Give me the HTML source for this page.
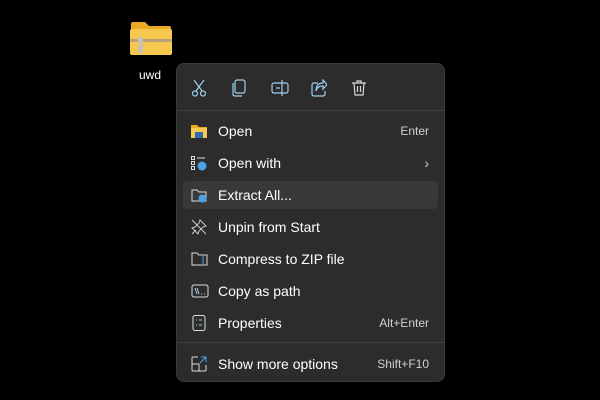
<!DOCTYPE html>
<html><head><style>
body{margin:0;width:600px;height:400px;background:#000;font-family:"Liberation Sans",sans-serif;position:relative;overflow:hidden}
.menu{position:absolute;left:176px;top:63px;width:269px;height:319px;background:#2c2c2c;border:1px solid #3a3a3a;border-radius:8px;box-sizing:border-box}
.sep{position:absolute;left:0;right:0;height:1px;background:#404040}
.it{position:absolute;left:0;right:0;height:28px;color:#fff;font-size:14px;line-height:28px}
.it .t{position:absolute;left:41px}
.it .k{position:absolute;right:15px;font-size:12px;color:#d0d0d0}
.it svg{position:absolute;left:14px;top:6px}
.tb svg{position:absolute;top:15px}
</style></head><body>
<svg style="position:absolute;left:129px;top:20px" width="44" height="36" viewBox="0 0 44 36">
<path d="M2 4 Q2 2 4 2 H16 L20 6 H40 Q42 6 42 8 V12 H2Z" fill="#e8a923"/>
<rect x="1" y="9" width="42" height="26" rx="2" fill="#f6c94e"/>
<rect x="1" y="19" width="42" height="3" fill="#b9a27a"/>
<rect x="9" y="17" width="5" height="16" fill="#c9c0b0"/>
</svg>
<div style="position:absolute;left:139px;top:68px;color:#fff;font-size:12px">uwd</div>
<div class="menu">
<div class="tb">
<svg style="left:14px" width="16" height="18" viewBox="0 0 16 18" fill="none" stroke="#9ecfee" stroke-width="1.2"><path d="M3 1L11 12M13 1L5 12"/><circle cx="4" cy="14.5" r="2.5"/><circle cx="12" cy="14.5" r="2.5"/></svg>
<svg style="left:54px" width="16" height="18" viewBox="0 0 16 18" fill="none" stroke="#9ecfee" stroke-width="1.2"><rect x="4" y="1" width="10" height="13" rx="2"/><path d="M2 4V15Q2 17 4 17H11"/></svg>
<svg style="left:94px" width="18" height="18" viewBox="0 0 18 18" fill="none" stroke="#9ecfee" stroke-width="1.2"><rect x="1" y="4" width="16" height="10" rx="2"/><path d="M11 1V17M5 9H9"/></svg>
<svg style="left:134px" width="16" height="18" viewBox="0 0 16 18" fill="none" stroke="#9ecfee" stroke-width="1.2"><path d="M7 4H3Q1 4 1 6V15Q1 17 3 17H12Q14 17 14 15V12"/><path d="M5 12Q6 7 12 7V10L16 5.5L12 1V4Q5 4 5 12Z"/></svg>
<svg style="left:174px" width="16" height="18" viewBox="0 0 16 18" fill="none" stroke="#d8d8d8" stroke-width="1.2"><path d="M1 4H15M6 4V2H10V4M3 4L4 16H12L13 4M6.5 7V13M9.5 7V13"/></svg>
</div>
<div class="sep" style="top:46px"></div>
<div class="it" style="top:53px"><svg width="16" height="16"><path d="M0 2H6L8 4H16V14H0Z" fill="#e8a923"/><rect x="0" y="5" width="16" height="10" fill="#f6c94e"/><rect x="4" y="9" width="8" height="6" fill="#2b6cb0"/></svg><span class="t">Open</span><span class="k">Enter</span></div>
<div class="it" style="top:85px"><svg width="16" height="16" fill="none" stroke="#ddd"><rect x="0.5" y="1.5" width="3" height="3"/><rect x="0.5" y="6.5" width="3" height="3"/><rect x="0.5" y="11.5" width="3" height="3"/><path d="M6 3H14"/><circle cx="11" cy="11" r="4.5" fill="#4aa3e8" stroke="none"/></svg><span class="t">Open with</span><span class="k" style="font-size:14px;color:#ccc">›</span></div>
<div class="it" style="top:117px;left:6px;right:6px;background:#383838;border-radius:4px"><svg style="left:8px" width="16" height="16" fill="none" stroke="#ddd"><path d="M1 3H6L8 5H15V14H1Z"/><circle cx="11.5" cy="11.5" r="4" fill="#4aa3e8" stroke="none"/></svg><span class="t" style="left:35px">Extract All...</span></div>
<div class="it" style="top:149px"><svg width="16" height="16" fill="none" stroke="#ccc"><path d="M9 1L15 7L12 8L8 12L7 15L1 9L4 8L8 4Z M1 15L5 11 M1 1L15 15"/></svg><span class="t">Unpin from Start</span></div>
<div class="it" style="top:181px"><svg width="18" height="16" fill="none" stroke="#ddd"><path d="M1 2H6L8 4H16V14H1Z"/><path d="M12 5V13" stroke="#4aa3e8"/></svg><span class="t">Compress to ZIP file</span></div>
<div class="it" style="top:213px"><svg width="18" height="16" fill="none" stroke="#ddd"><rect x="1" y="2" width="16" height="12" rx="2"/><path d="M4 5L6 11M6 5L8 11M10 11h1M13 11h1" stroke="#9ecfee"/></svg><span class="t">Copy as path</span></div>
<div class="it" style="top:245px"><svg width="16" height="16" fill="none" stroke="#ddd"><rect x="2" y="0.5" width="12" height="15" rx="2"/><path d="M5 5H6M8 5H11M5 10H6M8 10H11" stroke="#9ecfee"/></svg><span class="t">Properties</span><span class="k">Alt+Enter</span></div>
<div class="sep" style="top:278px"></div>
<div class="it" style="top:286px"><svg width="16" height="16" fill="none" stroke="#ddd"><path d="M7 1H2Q1 1 1 2V14Q1 15 2 15H14Q15 15 15 14V9M1 8H8V15"/><path d="M9 7L15 1M10 1H15V6" stroke="#4aa3e8"/></svg><span class="t">Show more options</span><span class="k">Shift+F10</span></div>
</div>
</body></html>
